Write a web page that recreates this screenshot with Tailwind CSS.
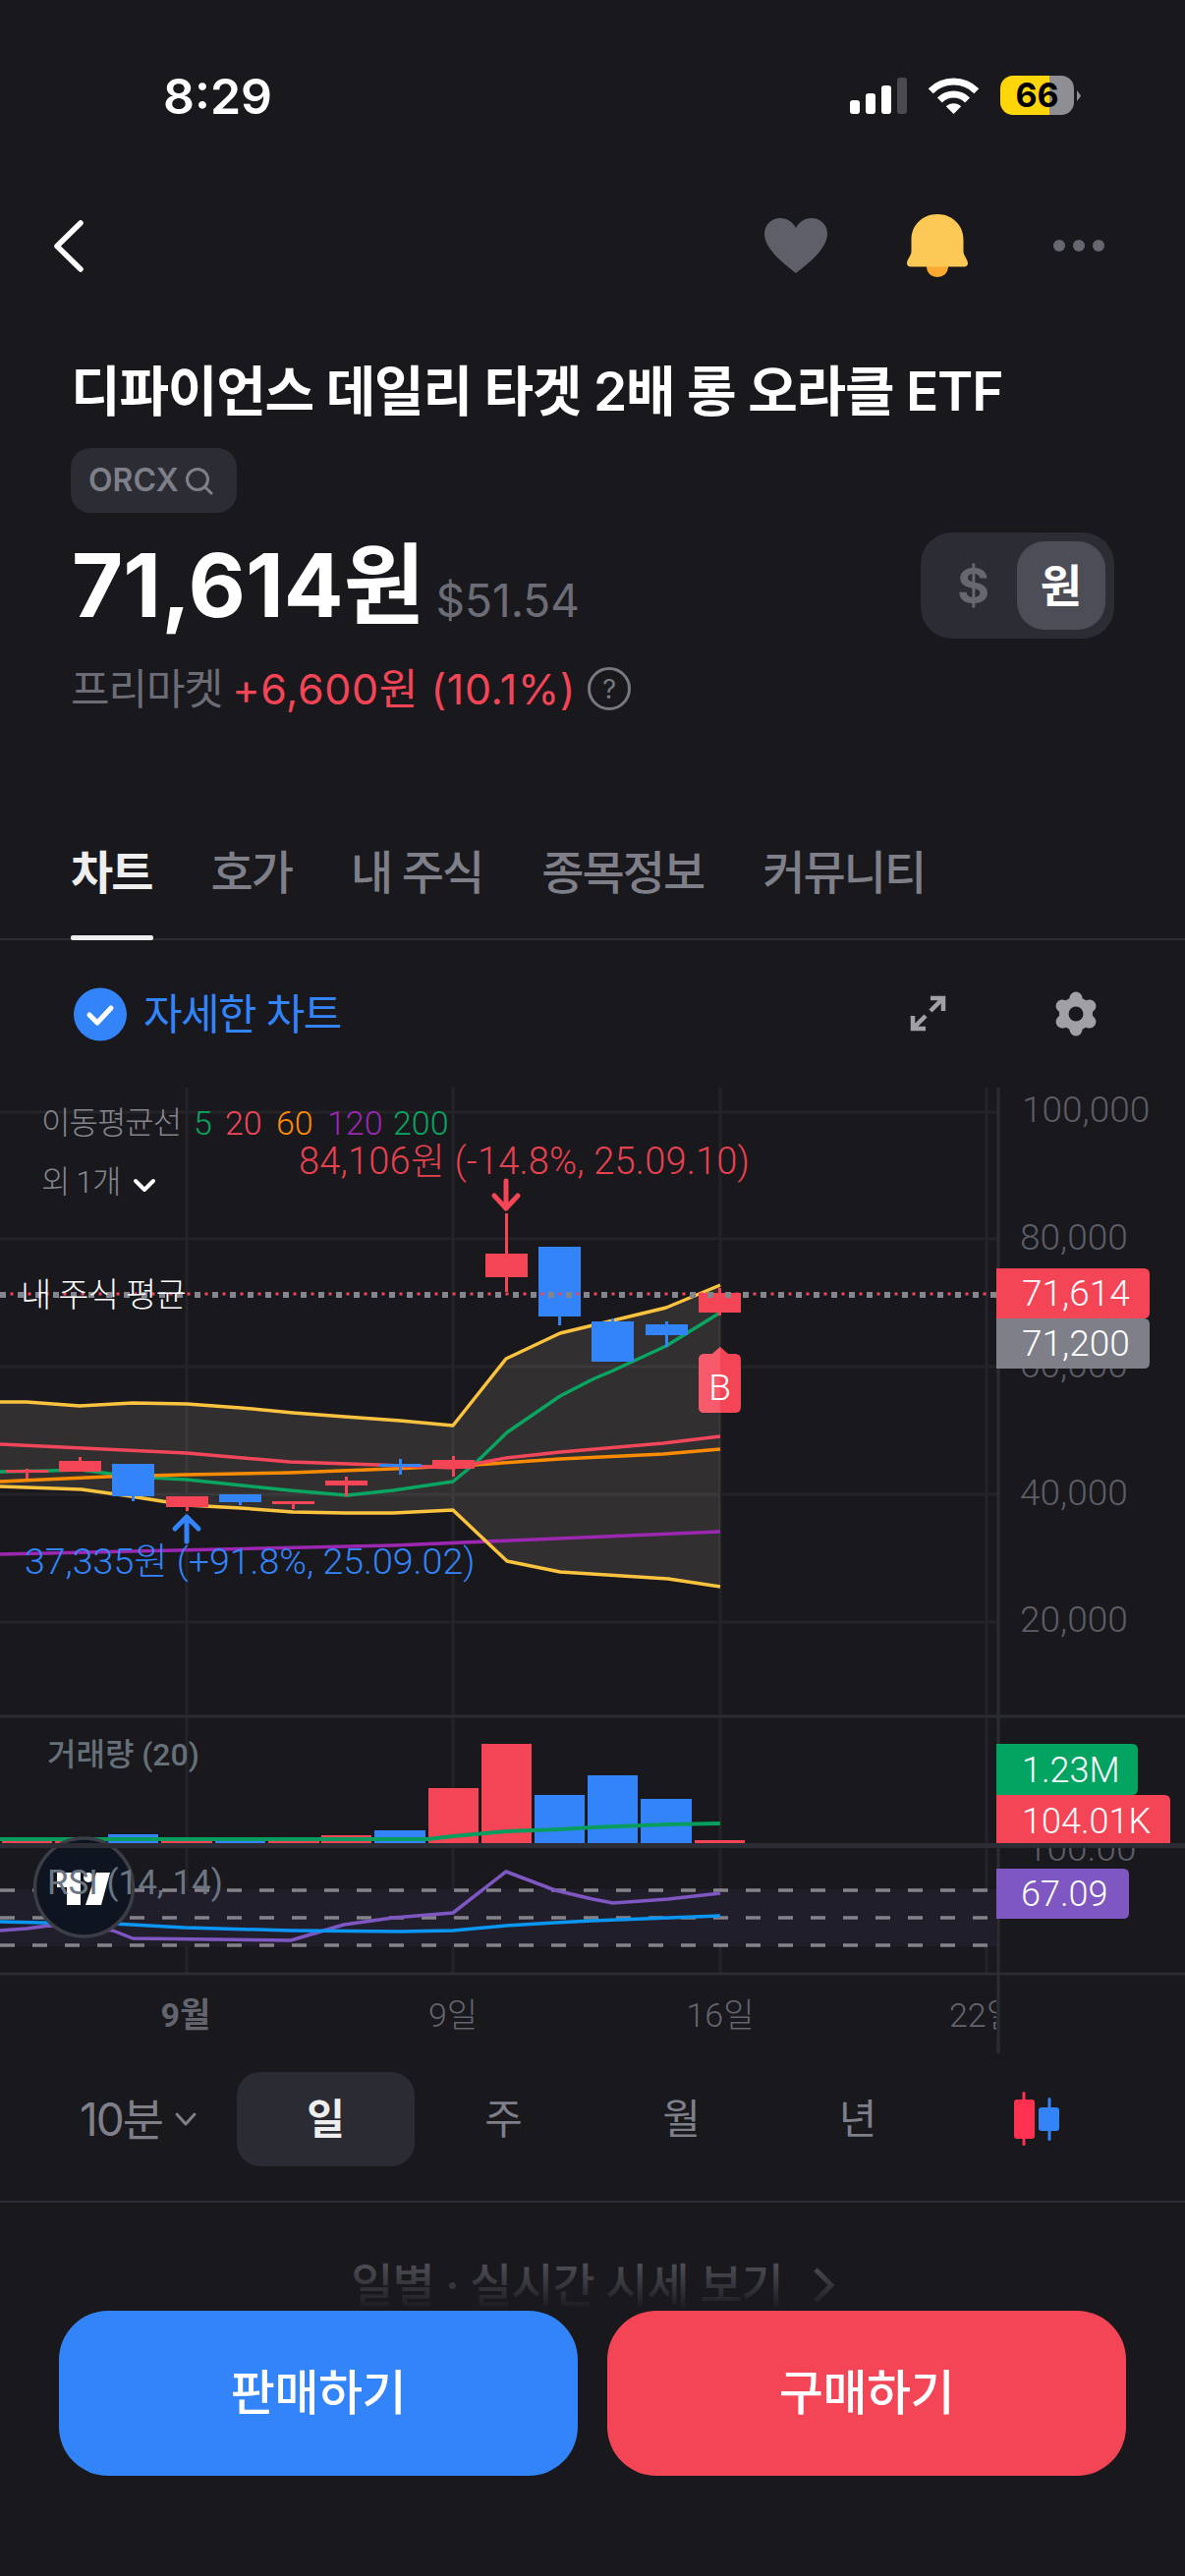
<!DOCTYPE html>
<html lang="ko">
<head>
<meta charset="utf-8">
<script src="https://cdn.jsdelivr.net/npm/@tailwindcss/browser@4"></script>
</head>
<body class="bg-[#18181d]">
<div class="relative w-[1206px] h-[2622px] overflow-hidden bg-[#18181d] text-white font-[family-name:Inter,'Noto_Sans_CJK_KR',sans-serif]">

  <!-- status bar -->
  <div class="relative h-[196px]">
    <div class="absolute left-[166px] top-[68px] text-[50px] leading-[60px] font-semibold">8:29</div>
    <svg class="absolute left-0 top-0" width="1206" height="196" viewBox="0 0 1206 196">
      <rect x="865" y="102" width="10" height="14" rx="3" fill="#fff"/>
      <rect x="881" y="95" width="10" height="21" rx="3" fill="#fff"/>
      <rect x="897" y="87" width="10" height="29" rx="3" fill="#fff"/>
      <rect x="913" y="79" width="10" height="37" rx="3" fill="#4a4a4f"/>
      <path d="M947.2 92.7A33 33 0 0 1 993.8 92.7" fill="none" stroke="#fff" stroke-width="7"/>
      <path d="M956.4 101.9A20 20 0 0 1 984.6 101.9" fill="none" stroke="#fff" stroke-width="7"/>
      <path d="M970.5 116L962.8 108.3A11 11 0 0 1 978.2 108.3Z" fill="#fff"/>
      <path d="M1096 92Q1100 97 1100 97.500Q1100 98 1096 103Z" fill="#8e8e93"/>
    </svg>
    <div class="absolute left-[1018px] top-[77px] w-[75px] h-[40px] rounded-[13px] flex items-center justify-center text-black text-[34px] font-bold leading-none bg-[linear-gradient(90deg,#ffd60a_66.500%,#8e8e93_66.500%)]">66</div>
  </div>

  <!-- nav -->
  <div class="relative h-[108px] flex items-center justify-between pl-[52px] pr-[82px]">
    <svg width="36" height="56" viewBox="52 222 36 56"><path d="M82 227L58 250.500L82 274" fill="none" stroke="#fff" stroke-width="5.500" stroke-linecap="round" stroke-linejoin="round"/></svg>
    <div class="flex items-center">
      <svg width="64" height="56" viewBox="778 225 64 56"><path d="M810 281C797 271 778 256 778 241C778 231 786 225 794 225C801 225 807 229 810 235C813 229 819 225 826 225C834 225 842 231 842 241C842 256 823 271 810 281Z" fill="#5f5f69"/></svg>
      <svg class="ml-[81px]" width="62" height="64" viewBox="923 220 62 64"><path d="M943 273H965C965 280 960 284 954 284C948 284 943 280 943 273Z" fill="#fba92f"/><path d="M954 220C939 220 927.500 231 927.500 246V258C927.500 262 923 266 923 270C923 272 924.500 273.500 926.500 273.500H981.500C983.500 273.500 985 272 985 270C985 266 980.500 262 980.500 258V246C980.500 231 969 220 954 220Z" fill="#fdc956"/></svg>
      <svg class="ml-[87px]" width="52" height="12" viewBox="1072 246 52 12"><circle cx="1078" cy="252" r="6" fill="#666771"/><circle cx="1098" cy="252" r="6" fill="#666771"/><circle cx="1118" cy="252" r="6" fill="#666771"/></svg>
    </div>
  </div>

  <!-- title -->
  <div class="mt-[64px] ml-[72px] h-[60px] text-[55px] leading-[60px] font-semibold tracking-[-1.200px] whitespace-nowrap">디파이언스 데일리 타겟 2배 롱 오라클 ETF</div>

  <!-- ticker chip -->
  <div class="mt-[28px] ml-[72px] w-[169px] h-[66px] rounded-[20px] bg-[#2b2c34] flex items-center pl-[18px] gap-[5px]">
    <span class="text-[32px] font-semibold text-[#7e7f88] leading-none">ORCX</span>
    <svg width="30" height="30" viewBox="0 0 30 30"><circle cx="14" cy="14" r="10.500" fill="none" stroke="#7e7f88" stroke-width="3"/><path d="M22 22L28 28" stroke="#7e7f88" stroke-width="3" stroke-linecap="round"/></svg>
  </div>

  <!-- price row -->
  <div class="mt-[20px] pl-[73px] pr-[72px] h-[108px] flex items-center justify-between">
    <div class="flex items-baseline gap-[11px]">
      <span class="text-[90px] leading-none font-bold tracking-[0px]">71,614원</span>
      <span class="text-[46px] leading-none text-[#6b6c75]">$51.54</span>
    </div>
    <div class="w-[197px] h-[108px] rounded-[32px] bg-[#2b2c34] flex items-center justify-end pr-[9px]">
      <div class="flex-1 text-center text-[50px] font-bold text-[#66676f] leading-none pl-[9px]">$</div>
      <div class="w-[90px] h-[90px] rounded-[28px] bg-[#4c4d57] flex items-center justify-center text-[46px] font-bold leading-none">원</div>
    </div>
  </div>

  <!-- premarket -->
  <div class="mt-[26px] ml-[72px] h-[50px] flex items-center text-[43px] leading-[50px] whitespace-nowrap">
    <span class="text-[#6b6c75] tracking-[-1px]">프리마켓</span>
    <span class="ml-[10px] text-[#f44556] tracking-[0.600px]">+6,600원 (10.1%)</span>
    <span class="ml-[12px] w-[44px] h-[44px] rounded-full border-[3px] border-[#77787f] text-[#77787f] text-[27px] leading-none flex items-center justify-center">?</span>
  </div>

  <!-- tabs -->
  <div class="relative mt-[134px] h-[97px] border-b-[2px] border-[#2b2c34]">
    <div class="flex pl-[72px] text-[47px] leading-[56px] font-medium text-[#7e7f88] tracking-[-2px] whitespace-nowrap gap-[60px]">
      <span class="relative text-[#eeeeee] font-bold">차트<span class="absolute left-0 top-[92px] w-[84px] h-[5px] rounded-[2px] bg-[#eeeeee]"></span></span>
      <span>호가</span>
      <span>내 주식</span>
      <span>종목정보</span>
      <span>커뮤니티</span>
    </div>
  </div>

  <!-- detail chart row -->
  <div class="h-[150px] flex items-center pl-[75px] pr-[89px] justify-between">
    <div class="flex items-center gap-[17px]">
      <svg width="54" height="55" viewBox="0 0 54 55"><circle cx="27" cy="27.500" r="27" fill="#3384f9"/><path d="M16 28L24 36L38 21" fill="none" stroke="#fff" stroke-width="5" stroke-linecap="round" stroke-linejoin="round"/></svg>
      <span class="text-[43px] leading-none font-normal text-[#3384f9] tracking-[-1.500px]">자세한 차트</span>
    </div>
    <div class="flex items-center gap-[109px]">
      <svg width="38" height="38" viewBox="926 1013 38 38"><path d="M929 1034V1047H942M929 1047L942 1034M947 1016H960V1029M960 1016L947 1029" fill="none" stroke="#a0a0a6" stroke-width="4.500"/></svg>
      <svg width="44" height="46" viewBox="-22 -23 44 46">
        <circle r="17" fill="#a0a0a6"/>
        <g stroke="#a0a0a6" stroke-width="13" stroke-linecap="round">
          <line x1="0" y1="-16" x2="0" y2="16"/>
          <line x1="0" y1="-16" x2="0" y2="16" transform="rotate(60)"/>
          <line x1="0" y1="-16" x2="0" y2="16" transform="rotate(120)"/>
        </g>
        <circle r="7.500" fill="#18181d"/>
      </svg>
    </div>
  </div>

  <!-- chart canvas -->
  <svg class="block font-[family-name:Roboto,'Noto_Sans_CJK_KR',sans-serif]" width="1206" height="983" viewBox="0 1107 1206 983">
    <!-- grid -->
    <g stroke="#232328" stroke-width="3">
      <line x1="0" y1="1132" x2="1016" y2="1132"/>
      <line x1="0" y1="1261" x2="1016" y2="1261"/>
      <line x1="0" y1="1391" x2="1016" y2="1391"/>
      <line x1="0" y1="1521" x2="1016" y2="1521"/>
      <line x1="0" y1="1651" x2="1016" y2="1651"/>
      <line x1="190" y1="1107" x2="190" y2="2009"/>
      <line x1="461" y1="1107" x2="461" y2="2009"/>
      <line x1="733" y1="1107" x2="733" y2="2009"/>
      <line x1="1004" y1="1107" x2="1004" y2="2009"/>
    </g>
    <line x1="1016" y1="1107" x2="1016" y2="2090" stroke="#2b2c34" stroke-width="3"/>

    <!-- bollinger fill -->
    <polygon fill="#ffedd6" fill-opacity="0.108" points="0,1427 27,1427 81,1431 135,1428 190,1429 245,1433 298,1438 351,1442 407,1446 461,1451 515,1383 570,1357 624,1344 678,1331 733,1308 733,1615 680,1607 570,1600 516,1589 461,1537 400,1540 351,1540 298,1539 245,1535 190,1532 133,1523 83,1516 0,1513"/>

    <!-- moving averages -->
    <g fill="none" stroke-width="3.500" stroke-linejoin="round">
      <polyline stroke="#9c27b0" points="0,1582 400,1573 733,1559"/>
      <polyline stroke="#fcc33f" points="0,1427 27,1427 81,1431 135,1428 190,1429 245,1433 298,1438 351,1442 407,1446 461,1451 515,1383 570,1357 624,1344 678,1331 733,1308"/>
      <polyline stroke="#fcc33f" points="0,1513 83,1516 133,1523 190,1532 245,1535 298,1539 351,1540 400,1540 461,1537 516,1589 570,1600 680,1607 733,1615"/>
      <polyline stroke="#09a561" points="0,1498 50,1497 82,1496 135,1503 190,1506 295,1517 353,1522 400,1517 461,1508 483,1490 516,1458 570,1421 603,1404 624,1395 678,1370 733,1336"/>
      <polyline stroke="#fd8b02" points="0,1508 110,1503 190,1501 295,1499 400,1495 483,1491 570,1485 675,1480 733,1475"/>
      <polyline stroke="#f2475a" points="0,1470 190,1479 295,1488 385,1491 461,1494 482,1490 515,1484 570,1478 675,1469 733,1462"/>
    </g>

    <!-- candles -->
    <g fill="#f44556">
      <rect x="6" y="1496" width="43" height="3"/><rect x="26" y="1495" width="3" height="10"/>
      <rect x="60" y="1487" width="43" height="11"/><rect x="80" y="1483" width="3" height="6"/>
      <rect x="169" y="1523" width="43" height="11"/><rect x="189" y="1532" width="3" height="6"/>
      <rect x="277" y="1528" width="43" height="3"/><rect x="297" y="1529" width="3" height="7"/>
      <rect x="331" y="1507" width="43" height="5"/><rect x="351" y="1503" width="3" height="20"/>
      <rect x="440" y="1486" width="43" height="9"/><rect x="460" y="1482" width="3" height="21"/>
      <rect x="494" y="1276" width="43" height="24"/><rect x="514" y="1235" width="3" height="80"/>
      <rect x="711" y="1316" width="43" height="20"/><rect x="731" y="1311" width="3" height="28"/>
    </g>
    <g fill="#3384f9">
      <rect x="114" y="1490" width="43" height="33"/><rect x="134" y="1521" width="3" height="7"/>
      <rect x="223" y="1521" width="43" height="8"/><rect x="243" y="1527" width="3" height="5"/>
      <rect x="386" y="1490" width="43" height="3"/><rect x="406" y="1485" width="3" height="16"/>
      <rect x="548" y="1269" width="43" height="71"/><rect x="568" y="1338" width="3" height="11"/>
      <rect x="602" y="1345" width="43" height="41"/><rect x="622" y="1342" width="3" height="5"/>
      <rect x="657" y="1348" width="43" height="11"/><rect x="677" y="1345" width="3" height="26"/>
    </g>

    <!-- average lines -->
    <line x1="0" y1="1317" x2="1014" y2="1317" stroke="#f44556" stroke-width="3" stroke-dasharray="3 15" stroke-dashoffset="-10.500"/>
    <line x1="0" y1="1318" x2="1014" y2="1318" stroke="#85868d" stroke-width="6" stroke-dasharray="6 12"/>

    <!-- signal arrows -->
    <path d="M515 1202V1230M503 1217L515 1230L527 1217" fill="none" stroke="#f44556" stroke-width="5" stroke-linecap="round" stroke-linejoin="round"/>
    <path d="M190 1569V1544M178 1556L190 1544L202 1556" fill="none" stroke="#3384f9" stroke-width="5" stroke-linecap="round" stroke-linejoin="round"/>

    <!-- B badge -->
    <path d="M733 1371L741 1378H748Q754 1378 754 1384V1432Q754 1438 748 1438H717Q711 1438 711 1432V1384Q711 1378 717 1378H725Z" fill="#f44556"/>
    <path d="M733 1371L725 1378H717Q711 1378 711 1384V1432Q711 1438 717 1438H733Z" fill="#f65a6b"/>
    <text x="732.500" y="1425" text-anchor="middle" class="text-[37px] font-light fill-white">B</text>

    <!-- chart texts -->
    <text x="42" y="1154" class="text-[32px] font-light fill-[#85868d]" letter-spacing="-1">이동평균선</text>
    <g class="text-[34px] font-light">
      <text x="197" y="1155" class="fill-[#09a561]">5</text>
      <text x="229" y="1155" class="fill-[#f2475a]">20</text>
      <text x="281" y="1155" class="fill-[#fd8b02]">60</text>
      <text x="333" y="1155" class="fill-[#9c27b0]">120</text>
      <text x="400" y="1155" class="fill-[#09a561]">200</text>
    </g>
    <text x="42" y="1214" class="text-[32px] font-light fill-[#85868d]" letter-spacing="-1">외 1개</text>
    <path d="M138 1202L147 1211L156 1202" fill="none" stroke="#fff" stroke-width="4" stroke-linecap="round" stroke-linejoin="round"/>
    <text x="304" y="1195" class="text-[38px] font-light fill-[#e8414f]" letter-spacing="0.200">84,106원 (-14.8%, 25.09.10)</text>
    <text x="25" y="1602" class="text-[37.500px] font-light fill-[#3384f9]">37,335원 (+91.8%, 25.09.02)</text>
    <text x="21" y="1330" class="text-[34px] font-light fill-white" letter-spacing="-0.700">내 주식 평균</text>

    <!-- price axis -->
    <g class="text-[37px] font-light fill-[#5c5d66]">
      <text x="1040" y="1142">100,000</text>
      <text x="1038" y="1272">80,000</text>
      <text x="1038" y="1402">60,000</text>
      <text x="1038" y="1532">40,000</text>
      <text x="1038" y="1661">20,000</text>
      <text x="1045" y="1894">100.00</text>
    </g>
    <path d="M1014 1291H1164Q1170 1291 1170 1297V1336Q1170 1342 1164 1342H1014Z" fill="#f44556"/>
    <path d="M1014 1342H1164Q1170 1342 1170 1348V1387Q1170 1393 1164 1393H1014Z" fill="#7e7f88"/>
    <g class="text-[37px] font-light fill-white">
      <text x="1040" y="1329">71,614</text>
      <text x="1040" y="1380">71,200</text>
    </g>

    <!-- pane separators -->
    <line x1="0" y1="1747" x2="1206" y2="1747" stroke="#2b2c34" stroke-width="3"/>

    <!-- volume -->
    <g fill="#f44556">
      <rect x="2" y="1873" width="51" height="4"/><rect x="56" y="1873" width="50" height="4"/>
      <rect x="164" y="1873" width="52" height="4"/><rect x="273" y="1873" width="52" height="4"/>
      <rect x="327" y="1868" width="51" height="9"/><rect x="436" y="1820" width="51" height="57"/>
      <rect x="490" y="1775" width="51" height="102"/><rect x="707" y="1873" width="51" height="4"/>
    </g>
    <g fill="#3384f9">
      <rect x="110" y="1867" width="51" height="10"/><rect x="219" y="1873" width="51" height="4"/>
      <rect x="381" y="1863" width="52" height="14"/><rect x="544" y="1827" width="51" height="50"/>
      <rect x="598" y="1807" width="51" height="70"/><rect x="652" y="1831" width="52" height="46"/>
    </g>
    <polyline fill="none" stroke="#089d5f" stroke-width="4" points="0,1872 435,1872 461,1869 515,1864 570,1862 603,1860 680,1857 733,1856"/>
    <text x="48" y="1797" class="text-[32px] font-medium fill-[#667078]">거래량 (20)</text>

    <path d="M1014 1775H1152Q1158 1775 1158 1781V1821Q1158 1827 1152 1827H1014Z" fill="#03a362"/>
    <path d="M1014 1827H1185Q1191 1827 1191 1833V1877H1014Z" fill="#f44556"/>
    <g class="text-[36px] font-light fill-white">
      <text x="1040" y="1814">1.23M</text>
      <text x="1040" y="1866">104.01K</text>
    </g>

    <!-- rsi -->
    <rect x="0" y="1923" width="1014" height="58" fill="#211e2c"/>
    <g stroke="#85828a" stroke-width="3.500" stroke-dasharray="15 18">
      <line x1="0" y1="1924" x2="1014" y2="1924"/>
      <line x1="0" y1="1952" x2="1014" y2="1952"/>
      <line x1="0" y1="1980" x2="1014" y2="1980"/>
    </g>
    <g fill="none" stroke-width="3.500" stroke-linejoin="round">
      <polyline stroke="#7e57c2" points="0,1965 27,1963 50,1960 115,1965 135,1973 296,1975 350,1959 400,1952 461,1947 515,1905 565,1924 603,1933 624,1937 680,1933 733,1927"/>
      <polyline stroke="#0a97f5" points="0,1956 42,1957 115,1958 188,1962 296,1965 408,1966 461,1965 515,1960 565,1957 603,1955 733,1950"/>
    </g>
    <path d="M1014 1902H1143Q1149 1902 1149 1908V1947Q1149 1953 1143 1953H1014Z" fill="#7e57c2"/>
    <text x="1039" y="1940" class="text-[36px] font-light fill-white">67.09</text>

    <!-- tradingview badge -->
    <circle cx="85.500" cy="1921" r="50" fill="#0f1520" stroke="#3b3d47" stroke-width="3.500"/>
    <path d="M58 1906H82V1939H68V1921H58Z" fill="#fff"/>
    <circle cx="90" cy="1911" r="5" fill="#fff"/>
    <path d="M98 1906H112L103 1939H87Z" fill="#fff"/>
    <line x1="0" y1="1878.500" x2="1206" y2="1878.500" stroke="#2b2c34" stroke-width="5"/>
    <text x="48" y="1928" class="text-[35px] font-normal fill-[#6c7682]">RSI (14, 14)</text>

    <line x1="0" y1="2009" x2="1206" y2="2009" stroke="#2b2c34" stroke-width="3"/>

    <!-- time axis -->
    <g class="text-[34px] fill-[#63646d]" text-anchor="middle">
      <text x="189" y="2063" class="font-bold">9월</text>
      <text x="461" y="2063" class="font-light">9일</text>
      <text x="733" y="2063" class="font-light">16일</text>
    </g>
    <text x="966" y="2063" class="text-[34px] font-light fill-[#63646d]">22일</text>
    <rect x="1014" y="2025" width="60" height="50" fill="#18181d"/>
    <line x1="1016" y1="2020" x2="1016" y2="2090" stroke="#2b2c34" stroke-width="3"/>
  </svg>

  <!-- interval row -->
  <div class="h-[152px] pt-[19px] border-b-[2px] border-[#2b2c34] flex items-start text-[#7e7f88] text-[42px] leading-[96px]">
    <div class="w-[241px] pl-[81px] flex items-center h-[96px] gap-[12px] text-[46px] tracking-[-2px]">10분<svg width="24" height="16" viewBox="0 0 24 16"><path d="M3 3L12 13L21 3" fill="none" stroke="#7e7f88" stroke-width="3" stroke-linecap="round" stroke-linejoin="round"/></svg></div>
    <div class="w-[181px] h-[96px] rounded-[24px] bg-[#2a2b33] text-center text-[#eeeeee] font-bold">일</div>
    <div class="w-[181px] text-center">주</div>
    <div class="w-[181px] text-center">월</div>
    <div class="w-[178px] text-center">년</div>
    <svg class="ml-[69px] mt-[20px]" width="48" height="56" viewBox="1031 2129 48 56">
      <rect x="1040.500" y="2129" width="3" height="55" rx="1.500" fill="#ff3050"/>
      <rect x="1032" y="2137" width="21" height="40" rx="3" fill="#ff3050"/>
      <rect x="1066.500" y="2135" width="3" height="44" rx="1.500" fill="#3384f9"/>
      <rect x="1057" y="2145" width="21" height="24" rx="3" fill="#3384f9"/>
    </svg>
  </div>

  <!-- realtime link -->
  <div class="mt-[54px] flex items-center justify-center gap-[30px] h-[60px] text-[47px] leading-[60px] font-medium text-[#5d5e66] tracking-[-1px] whitespace-nowrap">
    <span>일별 · 실시간 시세 보기</span>
    <svg width="22" height="44" viewBox="0 0 22 44"><path d="M3 6L19 22L3 38" fill="none" stroke="#5d5e66" stroke-width="5"/></svg>
  </div>

  <!-- bottom bar over content -->
  <div class="absolute left-0 bottom-0 w-full">
    <div class="h-[62px] bg-gradient-to-b from-[#18181d00] to-[#18181d]"></div>
    <div class="bg-[#18181d] h-[270px] flex gap-[30px] pl-[60px] pr-[60px]">
      <div class="w-[528px] h-[168px] rounded-[50px] bg-[#3384f9] flex items-center justify-center text-[49px] font-medium tracking-[-0.500px]">판매하기</div>
      <div class="w-[528px] h-[168px] rounded-[50px] bg-[#f44556] flex items-center justify-center text-[49px] font-medium tracking-[-0.500px]">구매하기</div>
    </div>
  </div>
</div>
</body>
</html>
